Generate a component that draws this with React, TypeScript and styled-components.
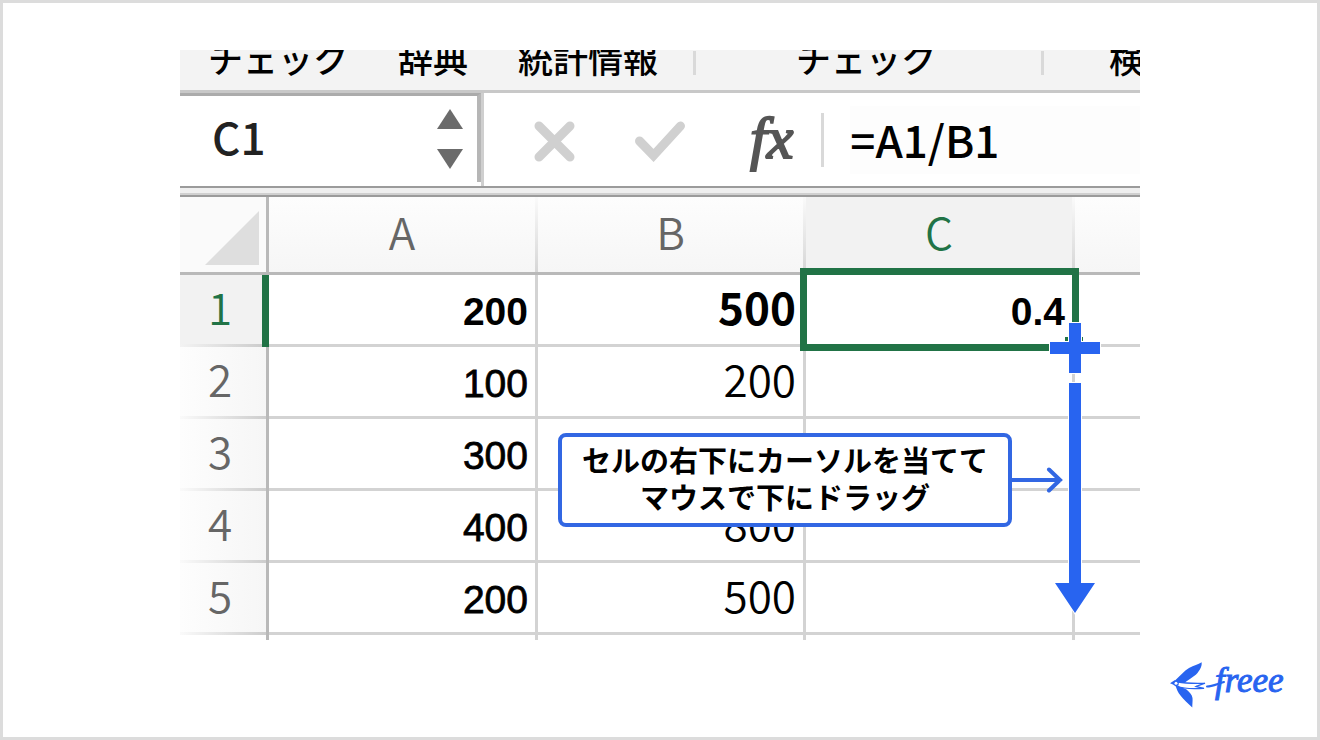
import React from "react";
import styled, { createGlobalStyle, css } from "styled-components";

const jp = `"Noto Sans CJK JP", "Noto Sans", sans-serif`;
const latin = `"Liberation Sans", Arial, sans-serif`;
const green = "#217346";
const blue = "#2864f0";
const calloutBlue = "#3267e3";
const rule = "#d3d3d3";
const strongRule = "#b9b9b9";

const GlobalStyle = createGlobalStyle`
  *, *::before, *::after { box-sizing: border-box; }
  body { margin: 0; background: #fff; font-family: ${jp}; color: #000; }
  button, input { font: inherit; color: inherit; border: 0; padding: 0; margin: 0; background: none; }
`;

const Frame = styled.div`
  min-height: 100vh;
  display: flex;
  flex-direction: column;
  padding: 47px 30px 27px;
  border: 3px solid #dcdcdc;
`;

const Sheet = styled.main`
  position: relative;
  width: 100%;
  max-width: 960px;
  margin: 0 auto;
  overflow: hidden;
`;

const Ribbon = styled.nav`
  display: flex;
  align-items: flex-end;
  height: 43px;
  padding-bottom: 15px;
  overflow: hidden;
  background: #f3f3f3;
  border-bottom: 3px solid #c8c8c8;
`;

const RibbonGroup = styled.div<{ $before: number; $after: number }>`
  display: flex;
  flex: none;
  gap: 50px;
  padding: 0 ${(p) => p.$after}px 0 ${(p) => p.$before}px;
`;

const RibbonButton = styled.button`
  font-size: 35px;
  line-height: 34px;
  font-weight: 500;
  white-space: nowrap;
`;

const Separator = styled.span<{ $height: number }>`
  flex: none;
  width: 3px;
  height: ${(p) => p.$height}px;
  background: #d9d9d9;
`;

const FormulaBar = styled.div`
  display: flex;
  align-items: center;
  height: 93px;
`;

const NameBoxEdge = styled.div`
  flex: none;
  align-self: stretch;
  width: 304px;
  padding-bottom: 4px;
  border-right: 3px solid #cfcfcf;
`;

const NameBox = styled.div`
  display: flex;
  align-items: center;
  justify-content: space-between;
  height: 100%;
  padding: 0 14px 0 32px;
  border-top: 3px solid #ababab;
  border-right: 4px solid #b6b6b6;
`;

const NameInput = styled.input`
  width: 160px;
  height: 60px;
  padding-bottom: 6px;
  font-size: 44px;
  font-weight: 500;
  color: #222;
`;

const Stepper = styled.div`
  display: flex;
  flex-direction: column;
  gap: 20px;
`;

const IconButton = styled.button`
  display: flex;
  flex: none;
`;

const Tools = styled.div`
  display: flex;
  flex: none;
  align-items: center;
  gap: 60px;
  padding: 4px 28px 0 50px;
`;

const FunctionButton = styled.button`
  height: 60px;
  padding: 0 0 8px 5px;
  font-family: "Liberation Serif", serif;
  font-style: italic;
  font-size: 60px;
  line-height: 52px;
  color: #555;
  -webkit-text-stroke: 2px #555;
`;

const FormulaInput = styled.input`
  flex: 1;
  min-width: 0;
  height: 68px;
  margin-left: 26px;
  padding-bottom: 1px;
  font-size: 44px;
  font-weight: 500;
  background: #fdfdfd;
`;

const Divider = styled.div`
  height: 11px;
  background: linear-gradient(#9b9b9b 2px, #efefef 2px 7px, #d0d0d0 7px 9px, #9b9b9b 9px);
`;

const Grid = styled.table`
  width: 100%;
  table-layout: fixed;
  border-collapse: separate;
  border-spacing: 0;
`;

const Corner = styled.td`
  height: 78px;
  padding: 14px 7px 7px 25px;
  vertical-align: top;
  line-height: 0;
  background: #fafafa;
  border-right: 3px solid ${strongRule};
  border-bottom: 3px solid ${strongRule};
`;

const ColumnHead = styled.th<{ $active?: boolean }>`
  height: 78px;
  padding: 0 3px 7px 0;
  font-size: 44px;
  line-height: 44px;
  font-weight: 350;
  color: ${(p) => (p.$active ? green : "#666")};
  border-bottom: 3px solid ${strongRule};
  background:
    linear-gradient(#fafafa, #d6d6d6) right / 3px 100% no-repeat,
    ${(p) => (p.$active ? "#f2f2f2" : "linear-gradient(#fdfdfd, #f6f6f6)")};
`;

const LastColumnHead = styled(ColumnHead)`
  background: linear-gradient(#fdfdfd, #f6f6f6);
`;

const RowHead = styled.th<{ $active?: boolean }>`
  height: 72px;
  padding: 0 6px 10px 0;
  font-size: 44px;
  line-height: 44px;
  font-weight: 350;
  color: #666;
  border-right: 3px solid ${strongRule};
  background:
    linear-gradient(to right, #fafafa, #cdcdcd) bottom / 100% 3px no-repeat,
    linear-gradient(to right, #fdfdfd, #f6f6f6);
  ${(p) =>
    p.$active &&
    css`
      padding-right: 2px;
      color: ${green};
      border-right: 7px solid ${green};
      background:
        linear-gradient(to right, #f3f3f3, #cdcdcd) bottom / 100% 3px no-repeat,
        #f2f2f2;
    `}
`;

const Cell = styled.td<{ $bold?: boolean }>`
  height: 72px;
  padding: 5px 7px 0 0;
  text-align: right;
  font-family: ${latin};
  font-size: 39px;
  line-height: 44px;
  font-weight: ${(p) => (p.$bold ? 700 : 400)};
  -webkit-text-stroke: ${(p) => (p.$bold ? "0" : "0.02em")} #000;
  border-right: 3px solid ${rule};
  border-bottom: 3px solid ${rule};

  &:last-child {
    border-right: 0;
  }
`;

const WideCell = styled(Cell)`
  padding: 0 7px 7px 0;
  font-family: ${jp};
  font-size: 44px;
  font-weight: ${(p) => (p.$bold ? 700 : 350)};
  -webkit-text-stroke: 0;
`;

const SelectedCell = styled(Cell)`
  position: relative;

  &::after {
    content: "";
    position: absolute;
    inset: -7px -7px -7px -6px;
    border: 7px solid ${green};
  }
`;

const TailRow = styled.tr`
  & > th,
  & > td {
    height: 5px;
    padding: 0;
    line-height: 0;
    border-bottom: 0;
    background: none;
  }
`;

const DragMark = styled.svg`
  position: absolute;
  left: 868px;
  top: 270px;
`;

const Callout = styled.div`
  position: absolute;
  left: 378px;
  top: 383px;
  display: flex;
  align-items: center;
`;

const CalloutText = styled.p`
  width: 454px;
  margin: 0;
  padding: 4px 0 8px;
  text-align: center;
  font-size: 29px;
  line-height: 37px;
  font-weight: 700;
  background: #fff;
  border: 4px solid ${calloutBlue};
  border-radius: 8px;
`;

const Footer = styled.footer`
  display: flex;
  justify-content: flex-end;
  margin-top: auto;
`;

const rows = [
  { n: 1, a: "200", b: "500" },
  { n: 2, a: "100", b: "200" },
  { n: 3, a: "300", b: "" },
  { n: 4, a: "400", b: "800" },
  { n: 5, a: "200", b: "500" },
];

function Logo() {
  return (
    <svg width="118" height="48" viewBox="0 0 118 48" role="img" aria-label="freee">
      <g fill={blue}>
        <path d="M6 18.500C11 14 15 9 20 6C25 3.500 29 2.500 32.700 0.300C33 4 31.500 7 29.500 9.500C28 12 26 13.500 23 15.500C20 17.500 18 19 15.500 20.700C12 20.700 10 20 8.500 19.500Z" />
        <path d="M6.500 23.500C10 25 14 25.500 17.500 27.500C20.500 30 23 32.500 23.500 36C23.800 39 23.200 42.500 23.300 45.500C19 41.500 14.500 37.500 11.500 33.500C9 30.500 7.500 27 6.500 23.500Z" />
        <path d="M1 21.300L6 18L10 19.500L9.500 23.500L6.500 24.300L4 22.500Z" />
      </g>
      <g fill="none" stroke={blue} strokeWidth="1.300" strokeLinecap="round">
        <path d="M9 20C16 21.500 26 21.500 35.500 21.300" />
        <path d="M8 24C15 27 25 27 34.500 26.300" />
        <path d="M35.500 21.300C32 22.500 29 23.500 27 24.500L34.500 26.300" />
        <path d="M38 24.500C43 24.500 48 22 55 20" strokeWidth="2" />
      </g>
      <circle cx="7" cy="21.300" r="1.500" fill="#fff" />
      <text
        x="46"
        y="30"
        fill={blue}
        stroke={blue}
        strokeWidth="1"
        fontFamily="Liberation Serif, serif"
        fontStyle="italic"
        fontSize="35"
      >
        freee
      </text>
    </svg>
  );
}

export default function App() {
  return (
    <>
      <GlobalStyle />
      <Frame>
        <Sheet>
          <Ribbon>
            <RibbonGroup $before={28} $after={35}>
              <RibbonButton>チェック</RibbonButton>
              <RibbonButton>辞典</RibbonButton>
              <RibbonButton>統計情報</RibbonButton>
            </RibbonGroup>
            <Separator $height={24} />
            <RibbonGroup $before={100} $after={105}>
              <RibbonButton>チェック</RibbonButton>
            </RibbonGroup>
            <Separator $height={24} />
            <RibbonGroup $before={65} $after={0}>
              <RibbonButton>検</RibbonButton>
            </RibbonGroup>
          </Ribbon>

          <FormulaBar>
            <NameBoxEdge>
              <NameBox>
                <NameInput aria-label="名前ボックス" defaultValue="C1" />
                <Stepper>
                  <IconButton aria-label="上へ">
                    <svg width="26" height="20" viewBox="0 0 26 20">
                      <path d="M13 0L26 20H0Z" fill="#6b6b6b" />
                    </svg>
                  </IconButton>
                  <IconButton aria-label="下へ">
                    <svg width="26" height="20" viewBox="0 0 26 20">
                      <path d="M0 0H26L13 20Z" fill="#6b6b6b" />
                    </svg>
                  </IconButton>
                </Stepper>
              </NameBox>
            </NameBoxEdge>
            <Tools>
              <IconButton aria-label="キャンセル">
                <svg width="41" height="41" viewBox="0 0 41 41">
                  <path
                    d="M5 5L36 36M36 5L5 36"
                    stroke="#d0d0d0"
                    strokeWidth="9"
                    strokeLinecap="round"
                  />
                </svg>
              </IconButton>
              <IconButton aria-label="入力">
                <svg width="50" height="41" viewBox="0 0 50 41">
                  <path
                    d="M4.500 20L18.500 34.500L45.500 5"
                    fill="none"
                    stroke="#d0d0d0"
                    strokeWidth="9"
                    strokeLinecap="round"
                  />
                </svg>
              </IconButton>
              <FunctionButton aria-label="関数の挿入">fx</FunctionButton>
            </Tools>
            <Separator $height={54} />
            <FormulaInput aria-label="数式" defaultValue="=A1/B1" />
          </FormulaBar>
          <Divider />

          <Grid>
            <colgroup>
              <col style={{ width: 89 }} />
              <col style={{ width: 269 }} />
              <col style={{ width: 268 }} />
              <col style={{ width: 269 }} />
              <col />
            </colgroup>
            <thead>
              <tr>
                <Corner>
                  <svg width="54" height="54" viewBox="0 0 54 54">
                    <path d="M54 0V54H0Z" fill="#dedede" />
                  </svg>
                </Corner>
                <ColumnHead scope="col">A</ColumnHead>
                <ColumnHead scope="col">B</ColumnHead>
                <ColumnHead scope="col" $active>
                  C
                </ColumnHead>
                <LastColumnHead as="td" />
              </tr>
            </thead>
            <tbody>
              {rows.map(({ n, a, b }) => (
                <tr key={n}>
                  <RowHead scope="row" $active={n === 1}>
                    {n}
                  </RowHead>
                  <Cell $bold={n === 1}>{a}</Cell>
                  <WideCell $bold={n === 1}>{b}</WideCell>
                  {n === 1 ? <SelectedCell $bold>0.4</SelectedCell> : <Cell />}
                  <Cell />
                </tr>
              ))}
              <TailRow>
                <RowHead as="td" />
                <Cell />
                <Cell />
                <Cell />
                <Cell />
              </TailRow>
            </tbody>
          </Grid>

          <DragMark width="54" height="296" viewBox="0 0 54 296" aria-hidden="true">
            <path d="M17 17H35V30H17Z" fill={green} />
            <g fill={blue} stroke="#fff" strokeWidth="2" paintOrder="stroke">
              <path d="M21 3H33V22H52V34H33V53H21V34H2V22H21Z" />
              <path d="M21 63H33V263H47L27 293L7 263H21Z" />
            </g>
          </DragMark>

          <Callout>
            <CalloutText>
              セルの右下にカーソルを当てて
              <br />
              マウスで下にドラッグ
            </CalloutText>
            <svg width="52" height="28" viewBox="0 0 52 28" aria-hidden="true">
              <path
                d="M0 14H48M37 3.500L48 14L37 24.500"
                fill="none"
                stroke={calloutBlue}
                strokeWidth="4"
                strokeLinecap="round"
              />
            </svg>
          </Callout>
        </Sheet>
        <Footer>
          <Logo />
        </Footer>
      </Frame>
    </>
  );
}
